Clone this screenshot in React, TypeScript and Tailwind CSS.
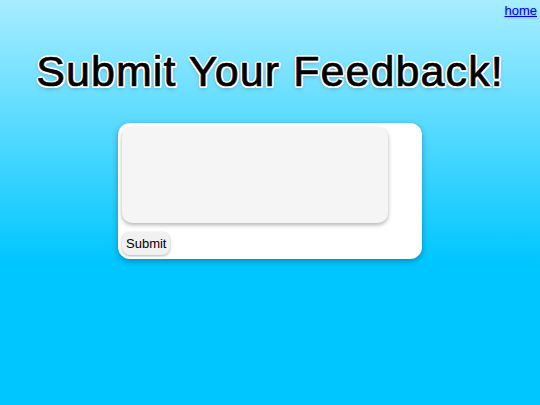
export default function App() {
  return (
    <div className="min-h-screen w-full bg-[linear-gradient(to_bottom,#a8edff_0px,#00c6ff_262px,#00c6ff_100%)] font-['Liberation_Sans',Arial,sans-serif]">
      <div className="flex justify-end px-[3px] pt-[3px]">
        <a
          href="#"
          className="text-[13px] leading-[15px] text-[#0000ee] underline [text-shadow:0_1px_2px_rgba(0,0,0,0.25)]"
        >
          home
        </a>
      </div>

      {/* title with white outline */}
      <h1 className="mt-[28px] text-center text-[43px] leading-[50px] tracking-[1.1px] text-black [-webkit-text-stroke:0.7px_#000] [text-shadow:-2px_0_0_#fff,2px_0_0_#fff,0_-2px_0_#fff,0_2px_0_#fff,-1.5px_-1.5px_0_#fff,1.5px_-1.5px_0_#fff,-1.5px_1.5px_0_#fff,1.5px_1.5px_0_#fff,0_2px_5px_rgba(0,0,0,0.35)]">
        Submit Your Feedback!
      </h1>

      <div className="flex justify-center mt-[27px]">
        <form className="w-[304px] rounded-[12px] bg-white p-[4px] shadow-[0_2px_6px_rgba(0,0,0,0.3)]">
          <textarea className="block h-[96px] w-[266px] resize-none rounded-[10px] bg-[#f5f5f5] shadow-[0_2px_4px_rgba(0,0,0,0.3)] outline-none" />
          <button
            type="button"
            className="mt-[9px] h-[23px] rounded-[8px] bg-[#f1f1f1] px-[4px] text-[13px] text-black shadow-[0_1px_3px_rgba(0,0,0,0.3)]"
          >
            Submit
          </button>
        </form>
      </div>
    </div>
  );
}
